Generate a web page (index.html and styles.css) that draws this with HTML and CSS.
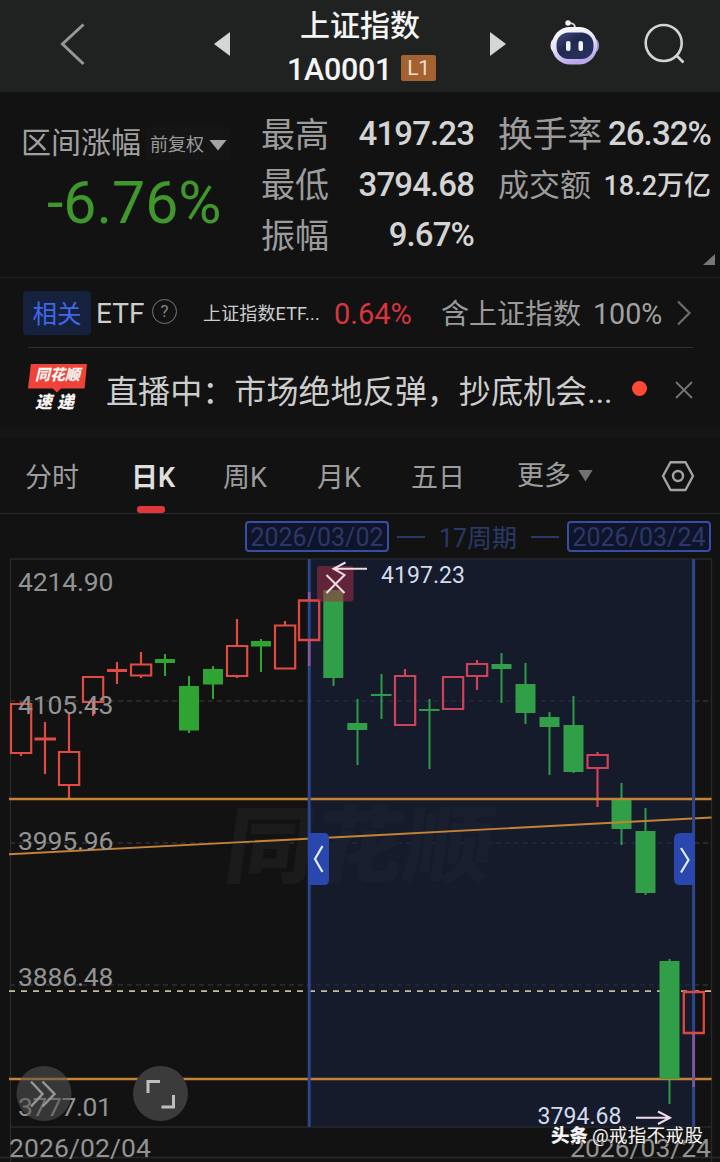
FILE: index.html
```html
<!DOCTYPE html>
<html lang="zh-CN">
<head>
<meta charset="utf-8">
<title>上证指数 1A0001</title>
<link rel="stylesheet" href="styles.css">
</head>
<body>
<header class="topbar">
  <svg class="back" width="30" height="46" viewBox="58 21 30 46"><path d="M83.500 24.500L62.500 44L83.500 64" fill="none" stroke="#969797" stroke-width="3"/></svg>
  <svg class="prev" width="16" height="24" viewBox="0 0 16 24"><path d="M16 0V24L0 12Z" fill="#d4d5d5"/></svg>
  <div class="title">
    <div class="name">上证指数</div>
    <div class="code"><span>1A0001</span><span class="level">L1</span></div>
  </div>
  <svg class="next" width="16" height="24" viewBox="0 0 16 24"><path d="M0 0V24L16 12Z" fill="#d4d5d5"/></svg>
  <svg class="robot" width="50" height="48" viewBox="550 19 50 48">
    <defs>
      <linearGradient id="shell" x1="0" y1="0" x2=".3" y2="1"><stop offset="0" stop-color="#ffffff"/><stop offset=".55" stop-color="#e6e0f8"/><stop offset="1" stop-color="#b9a9ea"/></linearGradient>
      <linearGradient id="face" x1="0" y1="0" x2="1" y2="1"><stop offset="0" stop-color="#454d7c"/><stop offset=".4" stop-color="#22294f"/><stop offset="1" stop-color="#2b3262"/></linearGradient>
    </defs>
    <path d="M575 28C575 24 573 23 568.500 23" fill="none" stroke="#d9d7e6" stroke-width="2"/>
    <circle cx="568" cy="23" r="2.700" fill="#f1f0f7"/>
    <ellipse cx="554" cy="45.500" rx="3.500" ry="6.500" fill="#e9e5f7"/>
    <ellipse cx="595.500" cy="45.500" rx="3.500" ry="6.500" fill="#a79ad2"/>
    <rect x="552" y="27" width="45" height="37.500" rx="18" fill="url(#shell)"/>
    <rect x="556.500" y="32.500" width="37" height="26.500" rx="12" fill="url(#face)"/>
    <rect x="566" y="41" width="4.500" height="10" rx="2" fill="#f1f5ff"/>
    <rect x="578.500" y="41" width="4.500" height="10" rx="2" fill="#f1f5ff"/>
  </svg>
  <svg class="search" width="44" height="44" viewBox="643 22 44 44"><circle cx="663.700" cy="43" r="18" fill="none" stroke="#d2d3d3" stroke-width="2.600"/><path d="M676.500 55.500L683.500 62.500" stroke="#d2d3d3" stroke-width="2.600"/></svg>
</header>

<section class="summary">
  <div class="change">
    <div class="change-head"><span class="range">区间涨幅</span><span class="adjust">前复权<i class="caret"></i></span></div>
    <div class="pct">-6.76%</div>
  </div>
  <dl class="stats">
    <dt>最高</dt><dd>4197.23</dd><dt class="wide">换手率</dt><dd>26.32%</dd>
    <dt>最低</dt><dd>3794.68</dd><dt class="small">成交额</dt><dd class="small">18.2万亿</dd>
    <dt>振幅</dt><dd>9.67%</dd>
  </dl>
  <i class="corner"></i>
</section>

<section class="etf">
  <span class="tag">相关</span><span class="etf-label">ETF</span><span class="help">?</span>
  <span class="etf-name">上证指数ETF...</span><span class="etf-pct">0.64%</span>
  <span class="contain">含上证指数</span><span class="full">100%</span>
  <svg width="16" height="26" viewBox="0 0 16 26"><path d="M2 1.500L13.500 13L2 24.500" fill="none" stroke="#6c6c6c" stroke-width="2.200"/></svg>
</section>

<section class="news">
  <div class="logo">
    <span class="logo-top"><b>同花顺</b></span>
    <span class="logo-bottom">速递</span>
  </div>
  <span class="headline">直播中：市场绝地反弹，抄底机会...</span>
  <i class="live"></i>
  <svg width="18" height="18" viewBox="0 0 18 18"><path d="M1 1L17 17M17 1L1 17" stroke="#757575" stroke-width="1.800"/></svg>
</section>

<nav class="tabs">
  <span>分时</span><span class="active">日K</span><span>周K</span><span>月K</span><span>五日</span><span class="more">更多<i></i></span>
  <svg width="34" height="32" viewBox="661 460 34 32"><path d="M670.500 462.200H685.500L693 476L685.500 490H670.500L663 476Z" fill="none" stroke="#a3a3a3" stroke-width="2.400" stroke-linejoin="round"/><circle cx="678" cy="476" r="5" fill="none" stroke="#a3a3a3" stroke-width="2.400"/></svg>
</nav>

<div class="period">
  <span class="date">2026/03/02</span><i></i><span class="count">17周期</span><i></i><span class="date">2026/03/24</span>
</div>

<svg class="chart" width="720" height="604" viewBox="0 558 720 604">
  <g class="frame">
    <path d="M10.500 1127V559H711.500V1127ZM10.500 1127V1162M0 1157.500H720M711.500 1127V1162"/>
    <path class="grid" d="M10 701H711M10 843H711M10 985H711"/>
  </g>
  <g transform="translate(222 876) skewX(-8)"><text class="mark" textLength="268" lengthAdjust="spacingAndGlyphs">同花顺</text></g>
  <g class="up">
    <path d="M21 702V704M21 753V756M45 722V774M69 713V752M69 785V798M93 702V716M117 662V684M141 652V664M141 676V678M237 619V646M237 676V678M285 621V625"/>
    <path d="M34.500 739H56M107 670.500H127" class="thick"/>
    <path d="M11 704H31.200V753H11ZM59 752H79.200V785H59ZM83 677H103.200V702H83ZM131 664.500H151.200V675.500H131ZM227 646H247.200V676H227ZM275 625.500H295.200V668.500H275Z"/>
  </g>
  <g class="down early">
    <path d="M165 654V676M189 676V733M213 666V699M261 639V672"/>
    <path class="body" d="M155 659H175V663H155ZM179 686H199V730.500H179ZM203 669H223V684.500H203ZM251 641H271V646.500H251Z"/>
  </g>
  <rect x="309" y="559" width="384" height="568" class="selected"/>
  <g class="up later">
    <path d="M405 669V676M477 660V664M477 676V690M597.500 752V755M597.500 768V807"/>
    <path d="M395 676H415.200V725H395ZM443 677H463.200V709H443ZM467 664H487.200V676H467ZM587.500 755H607.700V768H587.500Z"/>
  </g>
  <g class="down">
    <path d="M333.500 590V686M357.500 699V765M381.500 674V719M371 695H391.500M429.500 699V769M419 710H439.500M501.500 653V703M525.500 663V724M549.500 712V775M573.500 696V773M621.500 783V845M645.500 808V895M669.500 959V1104"/>
    <path class="body" d="M323.300 590H343.300V678H323.300ZM347.300 723H367.300V730H347.300ZM491.500 664H511.500V669H491.500ZM515.500 684H535.500V713H515.500ZM539.500 717H559.500V727H539.500ZM563.500 725H583.500V772H563.500ZM611.500 800H631.500V829H611.500ZM635.500 831H655.500V893H635.500Z"/>
  </g>
  <g class="orange"><path d="M9 799H711.500M9 1079H711.500"/><path class="trend" d="M9 854.300C240 842 480 830 711.500 817.500"/></g>
  <path d="M9 991.200H711" class="last-price"/>
  <path class="big-body" d="M659.500 961H679.500V1079H659.500Z"/>
  <path class="edge" d="M309.200 559V1127M693.600 559V1127"/>
  <path class="cross-wick" d="M309.200 592V600M309.200 640V666M693.600 1033V1087"/>
  <path class="last-candle" d="M299 600.500H319.200V640H299ZM683.800 992H703.800V1033H683.800Z"/>
  <path class="handle" d="M308 833H324Q329 833 329 838V880Q329 885 324 885H308ZM694.500 833H680Q674 833 674 839V879Q674 885 680 885H694.500Z"/>
  <path class="handle-mark" d="M322.500 846L315 859L322.500 872M681 848L688.500 860L681 872.500"/>
  <rect x="317" y="566" width="36.500" height="35.500" rx="3" class="close-box"/>
  <path class="pointer" d="M326.500 575L344.500 593M344.500 575L326.500 593M367 568.700H334M345.500 562.500L333.500 568.700L345.500 575.500M636 1117.700H669M658 1111.500L670 1117.700L658 1124"/>
  <text x="381" y="582.500" class="extreme" textLength="84">4197.23</text>
  <text x="537.500" y="1123.500" class="extreme" textLength="84">3794.68</text>
  <g class="axis">
    <text x="18" y="591" textLength="95.500">4214.90</text>
    <text x="18" y="714" textLength="95.500">4105.43</text>
    <text x="18" y="849.500" textLength="95.500">3995.96</text>
    <text x="18" y="985.500" textLength="95.500">3886.48</text>
    <text x="18" y="1115.500" textLength="94">3777.01</text>
    <text x="9" y="1156.500" textLength="142">2026/02/04</text>
    <text x="570" y="1156.500" textLength="141">2026/03/24</text>
  </g>
  <circle cx="44" cy="1093.500" r="27.500" class="expand"/>
  <path d="M31 1081.500L42.500 1094L31 1106.500M42.500 1081.500L54.500 1094L42.500 1106.500" class="expand-mark"/>
  <circle cx="160.500" cy="1093.500" r="27.500" class="full-bg"/>
  <path d="M148 1093V1081.500H160M173.500 1095V1107H161.500" class="full-mark"/>
  <g class="byline"><text x="551" y="1142" class="brand" textLength="37">头条</text><text x="592" y="1142" textLength="111">@戒指不戒股</text></g>
</svg>
</body>
</html>
```
FILE: styles.css
```css
* { box-sizing: border-box; }
body {
  margin: 0;
  width: 720px;
  height: 1162px;
  overflow: hidden;
  background: #121212;
  color: #cdcdcd;
  font-family: Roboto, "Noto Sans CJK SC", sans-serif;
  white-space: nowrap;
}
svg { display: block; flex: none; }
i { display: block; flex: none; }

.topbar { display: flex; height: 92px; background: #202222; }
.back { margin: 21px 0 0 58px; }
.prev { margin: 32px 0 0 126px; }
.title { width: 260px; flex: none; color: #f4f4f4; }
.name { height: 51px; line-height: 51px; font-size: 30px; font-weight: 500; text-align: center; }
.code { display: flex; align-items: center; height: 36px; padding-left: 57px; font-size: 30.5px; font-weight: 500; letter-spacing: -.3px; }
.level { width: 35px; height: 26px; margin: -2px 0 0 9px; border-radius: 2px; background: #a3622f; color: #f1dfd0; font-size: 21px; font-weight: 400; line-height: 26px; text-align: center; }
.next { margin: 32px 0 0; }
.robot { margin: 19px 0 0 44px; }
.search { margin: 22px 0 0 43px; }

.summary { position: relative; display: flex; height: 185px; padding-top: 17px; }
.change { width: 261px; padding-top: 17px; }
.change-head { display: flex; align-items: center; height: 34px; padding-left: 21px; }
.range { margin-top: -7px; font-size: 30px; color: #a0a0a0; }
.adjust { display: flex; align-items: center; gap: 5px; height: 33px; margin-left: 5px; padding: 0 3px 0 4px; background: #151515; color: #9a9a9a; font-size: 18px; }
.caret { width: 18px; height: 11px; margin-top: 4px; background: #a4a4a4; clip-path: polygon(0 0, 100% 0, 50% 100%); }
.pct { padding-left: 47px; margin-top: 8px; color: #40982c; font-size: 59px; line-height: 70px; }
.stats { display: grid; grid-template-columns: 68px 145px 24px 105px 108px; grid-auto-rows: 50.5px; margin: 0; align-items: center; line-height: 50px; }
.stats dt { padding-top: 1px; color: #9c9c9c; font-size: 34px; }
.stats dt.wide, .stats dt.small { grid-column: 4; }
.stats dt.wide { font-size: 34.700px; }
.stats dt.small { padding-top: 3px; font-size: 31px; }
.stats dt:not(.wide):not(.small) { grid-column: 1; }
.stats dd { margin: 0; text-align: right; color: #d4d4d4; font-size: 33px; font-weight: 500; letter-spacing: -.9px; }
.stats dd.small { padding-top: 3px; font-size: 27px; letter-spacing: 0; }
.corner { position: absolute; right: 5px; bottom: 12px; width: 12px; height: 11px; background: #777; clip-path: polygon(100% 0, 100% 100%, 0 100%); }

.etf { display: flex; align-items: center; height: 71px; padding: 0 0 0 23px; border-top: 1px solid #202020; background: linear-gradient(#303030, #303030) 28px 100% / 665px 1px no-repeat; line-height: 44px; }
.tag { width: 68px; height: 44px; margin-top: -1px; padding-top: 2px; border-radius: 4px; background: #16213d; color: #4168e8; font-size: 24.500px; text-align: center; }
.etf-label { width: 49px; margin: 2px 0 0 5px; font-size: 28px; }
.help { width: 25px; height: 25px; margin: -3px 0 0 7px; border: 1.500px solid #777; border-radius: 50%; color: #858585; font-size: 17px; line-height: 22px; text-align: center; }
.etf-name { width: 131px; margin: 2px 0 0 26px; font-size: 18px; letter-spacing: .15px; }
.etf-pct { width: 107px; margin-top: 2px; color: #d9343f; font-size: 29px; }
.contain { width: 152px; margin-top: 4px; font-size: 28px; color: #9b9b9b; }
.full { width: 83px; margin-top: 2px; font-size: 28.700px; color: #a1a1a1; }

.news { display: flex; align-items: center; height: 90px; padding: 0 0 0 28px; border-bottom: 10px solid #151515; }
.logo { width: 78px; height: 50px; margin-top: 1px; font-weight: 900; font-style: italic; line-height: 1; color: #f8f4f2; }
.logo-top { display: block; width: 59px; height: 29px; padding: 4px 0 0 7px; background: #ef4339; clip-path: polygon(5% 0, 100% 0, 96% 86%, 56% 86%, 49% 100%, 42% 86%, 0 86%); font-size: 15px; }
.logo-bottom { display: block; margin: 1px 0 0 7px; font-size: 17px; letter-spacing: 5px; }
.headline { width: 526px; margin-top: 1px; font-size: 32.100px; }
.live { width: 15px; height: 15px; margin: 1px 28px 0 0; border-radius: 50%; background: #ff4934; }
.news svg { margin-top: 3px; }

.tabs { display: flex; align-items: center; height: 76px; padding-left: 25px; border-bottom: 1px solid #2b2b2b; color: #9d9d9d; font-size: 27px; line-height: 80px; }
.tabs span { flex: none; height: 75px; }
.tabs span:nth-child(1) { width: 106px; }
.tabs span:nth-child(2) { width: 92px; }
.tabs span:nth-child(3) { width: 94px; }
.tabs span:nth-child(4) { width: 94px; }
.tabs span:nth-child(5) { width: 106px; }
.tabs .active { position: relative; color: #dedede; font-weight: 600; }
.tabs .active::after { content: ""; position: absolute; left: 6px; bottom: 0; width: 28px; height: 7px; border-radius: 3px; background: #df373b; }
.more { display: flex; align-items: center; width: 144px; gap: 7px; }
.more i { width: 15px; height: 12px; background: #727272; clip-path: polygon(0 0, 100% 0, 50% 100%); }

.period { display: flex; align-items: center; height: 44px; padding: 1px 0 0 245px; color: #293968; font-size: 25px; }
.date { width: 144px; height: 31px; border: 2px solid #364fa2; border-radius: 4px; background: #10142a; line-height: 29px; text-align: center; }
.period i { width: 28px; height: 2px; margin: 0 7px 0 8px; background: #293968; }
.count { width: 91px; padding: 4px 0 0 7px; line-height: 30px; }
.period .count + i { margin-right: 8px; }

.chart { overflow: hidden; }
.frame path { fill: none; stroke: #292929; stroke-width: 1.300; }
.frame .grid { stroke: #303134; stroke-dasharray: 5 4; }
.mark { fill: #1b1b1c; font-size: 84px; font-weight: 900; }
.up path { fill: none; stroke: #e04c43; stroke-width: 2.200; }
.up .thick { stroke-width: 3; }
.up.later path { stroke: #cf4359; }
.down path { stroke: #319c48; stroke-width: 2; fill: none; }
.down .body, .big-body { fill: #319f47; stroke: none; }
.down.early path { stroke: #2fa432; }
.down.early .body { fill: #2fa432; stroke: none; }
.selected { fill: #18233f; fill-opacity: .55; }
.orange path { fill: none; stroke: #c58336; stroke-width: 2.300; }
.orange .trend { stroke-width: 1.900; }
.last-price { stroke: #c9bb9a; stroke-width: 1.800; stroke-dasharray: 6 6; }
.edge { stroke: #2b458e; stroke-width: 3; }
.cross-wick { stroke: #84569c; stroke-width: 2.600; }
.last-candle { fill: none; stroke: #df4740; stroke-width: 2.300; }
.handle { fill: #2947ad; }
.handle-mark { fill: none; stroke: #e5edff; stroke-width: 2.200; }
.close-box { fill: #a32c43; fill-opacity: .55; }
.pointer { fill: none; stroke: #f0dce5; stroke-width: 2; }
.extreme { fill: #d3dbec; font-size: 23px; }
.axis { fill: #939393; font-size: 26.500px; }
.expand { fill: #555; fill-opacity: .55; }
.expand-mark { fill: none; stroke: #969696; stroke-width: 2.500; }
.full-bg { fill: #3b3b3b; }
.full-mark { fill: none; stroke: #bebebe; stroke-width: 3; }
.byline { fill: #f4f4f4; font-size: 18.500px; paint-order: stroke; stroke: #222; stroke-width: 1px; }
.byline .brand { font-weight: 900; }
```
